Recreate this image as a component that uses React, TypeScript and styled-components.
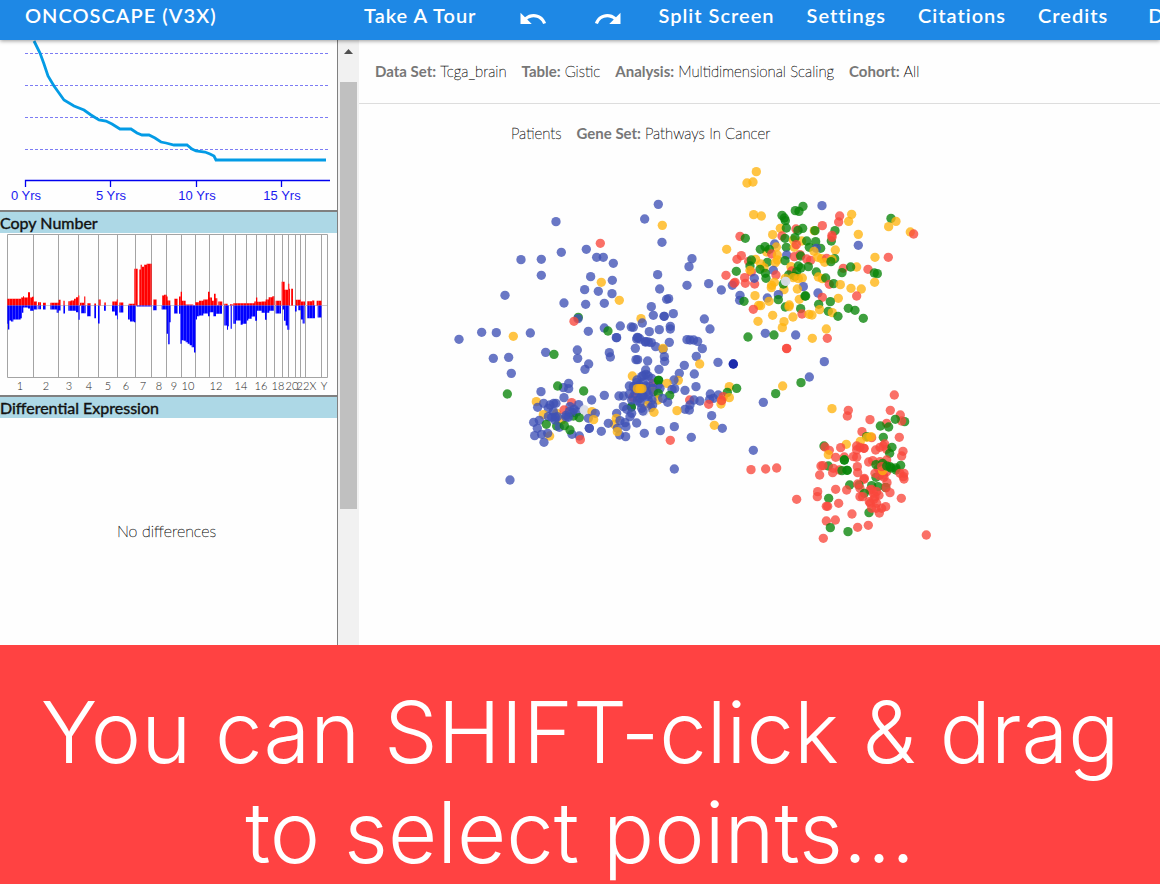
import React from "react";
import styled, { createGlobalStyle } from "styled-components";
import { MdRedo, MdUndo } from "react-icons/md";

const GlobalStyle = createGlobalStyle`
  *, *::before, *::after { box-sizing: border-box; }
  body {
    margin: 0;
    background: #fefefe;
    color: #000;
    font-family: Lato, "Open Sans", sans-serif;
    font-size: 15px;
    font-weight: 200;
  }
  button { font: inherit; color: inherit; border: 0; background: none; padding: 0; cursor: pointer; }
`;

const Page = styled.div`
  display: flex;
  flex-direction: column;
  min-height: 100vh;
  overflow: hidden;
`;

const Header = styled.header`
  position: relative;
  z-index: 1;
  display: flex;
  align-items: flex-start;
  height: 40px;
  padding-left: 25px;
  overflow: visible;
  background: #1e88e5;
  color: #fff;
  font-size: 20px;
  font-weight: 600;
  letter-spacing: 1px;
  line-height: 30px;
  box-shadow: 0 1px 4px rgba(0, 0, 0, 0.4);
`;

const Brand = styled.a`
  flex: 0 0 323px;
  color: inherit;
  text-decoration: none;
`;

const Nav = styled.nav`
  display: flex;
  flex: 1;
  min-width: 0;
  height: 40px;
  overflow: hidden;
`;

const NavLink = styled.a`
  flex: none;
  padding: 0 16px;
  color: inherit;
  text-decoration: none;
  white-space: nowrap;
`;

const IconButton = styled.button`
  display: flex;
  flex: 0 0 75px;
  justify-content: center;
  padding: 4px 0 0 5px;
  height: 40px;
`;

const Spacer = styled.span`
  flex: 0 0 8px;
`;

const Workspace = styled.div`
  display: flex;
  flex: 1;
`;

const Sidebar = styled.aside`
  display: flex;
  flex: 0 0 338px;
  flex-direction: column;
  border-right: 1px solid #808080;
`;

const PanelTitle = styled.h2`
  margin: 0;
  height: 23px;
  border-top: 2px solid #808080;
  background: #add8e6;
  color: #111;
  font-size: 16px;
  font-weight: 400;
  line-height: 22px;
  -webkit-text-stroke: 0.4px #111;
`;

const PanelChart = styled.svg`
  display: block;
  flex: none;
  width: 337px;
`;

const EmptyPanel = styled.div`
  display: flex;
  flex: 1;
  align-items: center;
  justify-content: center;
  padding: 0 4px 2px 0;
  font-size: 16px;
  -webkit-text-stroke: 0.3px #000;
`;

const ScrollTrack = styled.div`
  display: flex;
  flex: 0 0 21px;
  flex-direction: column;
  padding-left: 2px;
  background: #f1f1f1;
`;

const ScrollArrow = styled.svg`
  display: block;
  flex: none;
  width: 17px;
  height: 42px;
`;

const ScrollThumb = styled.div`
  width: 17px;
  height: 427px;
  background: #c0c0c0;
`;

const Main = styled.main`
  flex: 1;
  min-width: 0;
  overflow: hidden;
`;

const Facts = styled.dl<{ $inset?: boolean }>`
  display: flex;
  align-items: center;
  gap: 15px;
  margin: 0;
  height: ${(p) => (p.$inset ? 60 : 64)}px;
  padding-bottom: 2px;
  padding-left: ${(p) => (p.$inset ? 152 : 16)}px;
  border-bottom: ${(p) => (p.$inset ? 0 : 1)}px solid #ddd;
  white-space: nowrap;
`;

const Fact = styled.div`
  display: flex;
  gap: 4px;
`;

const FactName = styled.dt`
  color: #777;
  font-weight: 700;
`;

const FactValue = styled.dd`
  margin: 0;
  -webkit-text-stroke: 0.3px #000;
`;

const Plot = styled.svg`
  display: block;
  width: 801px;
  height: 400px;
`;

const Banner = styled.section`
  padding: 38px 20px 1px;
  background: #ff4242;
  color: #fff;
  font-family: Inter, sans-serif;
  font-size: 85px;
  font-weight: 300;
  line-height: 100px;
  text-align: center;
`;

const BannerText = styled.p`
  margin: 0;
`;

const SURVIVAL =
  "34,0 40,12 44,23 48,35 54,45 59,52 64,59 74,65 84,69 91,74 99,79 106,80 112,83 120,88 131,88 137,92 142,94 149,94 155,97 161,101 166,102 174,104 187,104 192,108 196,110 205,111 210,113 214,115 216,119 326,119";

const YEAR_TICKS: [number, string][] = [
  [26, "0 Yrs"],
  [111, "5 Yrs"],
  [197, "10 Yrs"],
  [282, "15 Yrs"],
];

function SurvivalChart() {
  return (
    <PanelChart viewBox="0 -1 337 170" height={170} role="img" aria-label="Survival">
      <g stroke="#7c7cf4" strokeDasharray="3 2">
        {[12.5, 44.5, 76.5, 108.5].map((y) => (
          <path key={y} d={`M25 ${y}H328`} />
        ))}
      </g>
      <polyline points={SURVIVAL} fill="none" stroke="#039be5" strokeWidth={2.8} />
      <path d="M330 139.5H25.5V146M110.5 139v7M196.5 139v7M281.5 139v7" fill="none" stroke="#0000f0" strokeWidth={1.3} />
      <g fill="#1a1af0" fontFamily="Liberation Sans, Arial, sans-serif" fontSize={13} fontWeight={400} textAnchor="middle">
        {YEAR_TICKS.map(([x, label]) => (
          <text key={x} x={x} y={159}>{label}</text>
        ))}
      </g>
    </PanelChart>
  );
}

/* Copy number runs as start-end:height, in thirds of a pixel. */
const GAINS =
  "22-63:20 63-69:24 69-72:28 72-84:24 84-90:40 90-96:24 96-102:26 102-111:12 114-123:10 129-138:8 151-176:8 176-182:17 190-194:14 205-212:13 212-222:15 222-228:20 228-234:25 234-238:30 240-252:8 252-256:27 262-272:7 283-288:6 296-302:18 313-318:9 337-350:12 350-354:18 358-370:9 386-405:5 403-413:110 418-422:108 422-426:122 426-432:116 432-440:122 440-455:125 460-470:18 486-492:30 492-500:32 500-503:27 503-511:15 523-533:20 537-542:27 542-546:41 546-557:14 557-580:3 585-597:10 597-610:14 610-624:18 624-629:41 629-636:24 636-642:14 642-647:35 647-652:22 655-667:12 673-683:5 690-698:4 700-763:7 763-768:12 768-772:24 772-785:11 785-797:12 797-806:18 806-817:25 817-823:28 827-843:14 845-854:71 854-864:47 864-868:65 868-870:50 873-879:50 887-903:17 903-915:12 922-936:13 936-943:15 950-965:14";
const LOSSES =
  "22-24:55 24-28:72 28-33:45 33-40:48 40-62:42 62-66:38 66-70:22 70-84:6 84-90:9 90-102:16 102-112:12 115-123:11 129-137:12 151-170:12 170-176:22 176-182:15 190-195:24 205-228:16 228-235:20 235-239:43 243-257:23 261-272:32 283-288:38 294-299:54 312-318:16 336-345:18 345-351:30 351-354:41 358-370:21 384-390:42 390-402:48 402-407:50 410-455:3 459-470:14 485-500:12 500-504:85 504-509:116 509-512:50 522-533:24 537-541:25 541-545:115 545-551:104 551-557:106 557-563:110 563-569:115 569-575:119 575-582:125 582-587:141 587-591:42 591-598:32 598-610:30 610-624:24 624-629:32 629-640:20 640-648:32 648-666:25 673-681:60 681-684:73 684-687:62 692-696:70 700-708:55 708-722:45 722-728:58 728-740:55 740-745:45 745-755:40 755-765:33 765-771:46 771-785:16 785-795:22 795-800:43 800-808:22 808-822:16 827-843:24 847-852:12 852-857:46 857-862:60 862-868:73 885-890:18 895-903:14 903-908:42 908-914:54 922-945:38 953-965:36";

const CHROMOSOME_EDGES = [33, 58, 78, 98, 117, 135, 151, 166, 181, 195, 209, 223, 235, 246, 256, 266, 274, 282, 288, 295, 300, 305, 321];

const CHROMOSOMES: [number, string][] = [
  [20, "1"], [46, "2"], [69, "3"], [89, "4"], [108, "5"], [126, "6"], [143, "7"], [159, "8"], [174, "9"], [188, "10"],
  [216, "12"], [241, "14"], [261, "16"], [278, "18"], [292, "20"], [303, "22"], [313, "X"], [324, "Y"],
];

function runPath(runs: string, direction: number) {
  return runs
    .split(" ")
    .map((run) => {
      const [start, end, height] = run.split(/[-:]/).map(Number);
      return `M${start} 0H${end}V${height * direction}H${start}Z`;
    })
    .join("");
}

function CopyNumberChart() {
  return (
    <PanelChart viewBox="0 -1 337 162" height={162} role="img" aria-label="Copy number by chromosome">
      <defs>
        <pattern id="stripes" width={9} height={9} patternUnits="userSpaceOnUse">
          <rect width={2} height={9} fill="#fff" opacity={0.3} />
        </pattern>
      </defs>
      <g fill="none" stroke="#a4a4a4">
        <path d="M7.5 .5H327.5V143.5H7.5Z" />
        <path d={CHROMOSOME_EDGES.map((x) => `M${x}.5 0V143`).join("")} />
        <path d="M8 71.5H327" stroke="#ccc" />
      </g>
      <g transform="translate(0 71.5) scale(.3333)">
        <path d={runPath(GAINS, -1)} fill="#f00" />
        <path d={runPath(LOSSES, 1)} fill="#00f" />
        <path d={runPath(GAINS, -1)} fill="url(#stripes)" />
        <path d={runPath(LOSSES, 1)} fill="url(#stripes)" />
      </g>
      <g fill="#222" fontSize={11} fontWeight={300} textAnchor="middle">
        {CHROMOSOMES.map(([x, label]) => (
          <text key={label} x={x} y={156}>{label}</text>
        ))}
      </g>
    </PanelChart>
  );
}

const DOT_COLORS: Record<string, string> = {
  b: "#3f51b5",
  r: "#f9483c",
  g: "#088408",
  y: "#ffb30f",
  n: "#1020a8",
  w: "#d8dce8",
};

/* Dots are listed by colour letter and position, in thirds of a pixel from the cluster's origin. */
const CLUSTERS = [
  {
    x: 81,
    y: -4,
    dots: "b655,133 b614,177 b348,185 y667,196 b666,247 r481,250 b439,268 b364,277 b470,292 b490,292 b243,299 b304,298 b520,310 b304,346 b452,350 b517,361 y484,367 b653,344 b434,389 b475,394 b516,401 b659,387 b195,406 y538,421 b686,416 b680,418 b372,429 b437,433 b493,430 b634,440 g415,472 b414,476 r402,484 y603,476 b640,466 b673,469 b672,469 b700,461 b607,489 b541,498 b574,501 b580,502 b493,504 g504,513 b445,514 b628,515 b658,509 b691,499 b691,507 b125,517 b169,518 y220,529 b271,519 b529,533 b594,533 b57,538 b617,545",
  },
  {
    x: 301,
    y: -4,
    dots: "y289,35 y261,69 y279,66 b486,137 g429,139 g406,152 g417,154 g366,166 g373,174 g376,182 y281,164 y304,168 r539,168 y575,163 r536,186 y566,184 r487,197 g693,175 y708,184 y686,200 y751,216 r761,222 y361,205 g379,204 g428,205 r408,207 g414,211 y463,212 g465,212 g525,212 y338,224 y595,223 r240,229 g256,235 r366,228 g375,235 g514,243 r516,226 r516,232 b595,256 y200,268 b344,252 y425,243 y400,240 g405,233 g440,243 g467,245 y349,261 g379,262 y403,262 r409,254 y320,276 g315,260 g301,268 g328,268 r335,282 g448,262 g482,265 b469,265 y526,270 y462,274 r244,287 r231,298 y352,285 b380,285 y352,300 g375,302 r403,290 r420,284 g422,288 r440,297 r452,301 y473,292 y485,296 r500,295 g524,296 y516,298 y494,307 g513,305 y645,292 r685,292 r266,304 y287,298 g274,300 g322,307 y346,308 g270,318 y302,312 y312,323 b340,331 y393,320 g415,318 g423,324 g445,320 g300,328 g229,334 r274,336 y270,331 r198,346 g316,340 r395,333 g410,335 g469,336 r550,325 g546,338 y590,321 g572,321 r624,328 g643,339 g652,341 r348,345 g318,355 g386,345 g405,349 r254,353 y400,353 y415,356 y427,354 y475,351 y487,356 g497,354 r225,367 b217,376 r222,370 r256,370 r284,372 b283,355 y343,367 y335,376 y334,383 y376,355 y372,389 g370,372 b430,380 y412,387 w377,364 w377,364 r508,373 g521,371 y541,374 y573,385 y604,387 y644,367 r590,408 b240,406 b239,421 g252,424 y285,407 b322,414 b355,404 y327,424 g355,419 y418,418 g435,408 g437,408 b474,399 r487,412 y535,415 g511,425 g476,433 y296,436 y302,437 r280,448 g376,441 y388,435 y387,440 g422,446 y479,449 g505,454 y517,458 g534,469 g565,445 g585,451 g610,475 r426,462 y447,463 y456,465 y338,466 y399,471 y372,485 y367,503 y294,484 y499,507 b133,477 b150,507 b96,296 b87,320 b81,376 b146,371 b184,390 b316,520 g342,525 g264,531 b407,525 y457,535 r502,535 r380,566",
  },
  {
    x: 81,
    y: 156,
    dots: "b160,115 b206,112 b317,97 g342,103 b412,90 b413,115 b446,132 b435,148 b214,160 g202,222 b303,215 b386,190 b370,203 b386,206 g353,198 g431,213 b455,240 b372,233 y289,245 b293,262 b311,250 b341,250 b348,250 b325,265 y310,284 r395,248 b390,260 b416,254 y350,280 y365,300 b340,275 r372,270 b398,278 g400,288 b410,276 b378,286 b346,292 b385,292 b378,292 b325,290 b281,307 b298,301 g319,313 b292,325 b284,347 b305,343 y329,348 b323,340 b312,367 g350,318 b358,322 g373,317 b396,343 g390,330 b418,348 r421,359 g418,293 w433,270 w433,270 y456,275 b445,295 b466,280 y461,299 b448,325 b448,325 b345,300 b352,290 b330,255 b335,292 b402,268 b388,275 b210,480",
  },
  {
    x: 221,
    y: 156,
    dots: "b110,53 b73,226 b64,334 b88,98 b91,111 b170,57 b180,57 b172,52 b196,66 b214,68 b205,66 b227,80 b268,67 b166,85 b321,59 b341,60 b330,60 b353,64 b367,86 b349,109 b249,88 y249,85 b253,110 b254,124 b168,119 b173,119 b203,123 b313,136 y359,132 b414,127 n460,132 n460,132 b343,162 b237,148 b298,160 b197,150 b198,163 b190,166 b205,168 y157,168 b185,170 y295,181 b282,180 r220,190 b171,180 b170,188 b215,175 b235,195 g236,181 g236,181 b190,188 b148,198 b178,195 b198,198 y261,190 b348,200 b315,211 b284,206 b276,208 b210,200 b218,205 y220,215 b240,205 b160,200 b185,205 b170,212 b200,215 b117,228 r158,232 b130,228 b148,222 b180,235 b190,228 b172,242 b205,240 b220,215 g235,220 g269,226 b263,247 y234,240 b216,240 b205,225 b248,235 b360,243 r329,240 b342,240 b391,222 b389,238 b400,235 b415,225 y448,200 g442,217 g470,205 y425,240 r430,230 y448,233 y423,252 r425,242 r386,253 b330,255 b328,270 b315,268 y291,272 b395,287 y403,316 b427,325 y202,257 b212,263 b218,255 y222,277 w192,275 b189,273 b185,265 b130,260 b154,261 g154,261 b150,290 b140,268 b155,280 b110,280 y109,295 y103,313 b85,310 b120,302 b170,309 b138,320 b135,308 b119,345 b112,325 y112,335 b137,350 b193,340 b241,332 b334,352 b283,320 r271,361 b283,447 b155,240 b165,220 b185,225 b180,248 y172,206 y186,206 y180,206",
  },
  {
    x: 381,
    y: 176,
    dots: "r140,25 b253,65 b208,111 g183,128 y128,138 g107,161 b70,187 y276,206 r463,165 r451,211 r325,211 r322,228 r390,239 r440,250 r481,225 g494,245 r485,243 g466,238 g421,258 g446,261 r366,275 r478,292 g430,292 r395,293 g380,290 y393,290 y381,292 y361,304 y319,313 g252,318 r255,321 r268,331 y265,344 r302,323 r350,318 r360,322 r372,325 r372,325 r350,330 r287,352 r313,351 g313,360 g313,360 r407,330 r420,322 r434,312 r440,328 r430,318 g456,322 g449,340 r489,334 r485,348 r350,352 r340,350 r386,366 r398,362 g265,378 r243,378 r249,377 r239,405 r280,385 r278,398 r298,390 g306,392 g321,391 g322,391 r352,380 r353,398 r373,415 r372,418 r420,365 r440,360 g408,412 r415,385 g408,374 g428,370 r405,400 r418,407 r430,405 r440,395 r432,412 y428,392 r425,380 g440,378 g453,384 g468,390 g482,376 g450,380 g468,384 r480,400 r492,400 r492,417 r490,410 b40,331 r441,428 g395,437 g414,440 g437,443 r438,443 r395,448 g329,435 g357,435 r353,432 r360,445 r320,450 r287,448 r233,455 r232,470 g266,475 r259,499 r263,499 r296,490 r170,478 r33,389 r77,387 r110,384 r390,450 r400,460 r410,455 r417,466 r405,470 r450,458 r484,475 g373,460 r360,470 r368,470 r388,485 r391,490 r410,490 r402,478 r437,500 r425,505 r418,519 g387,518 r395,505 r408,505 r336,522 r259,543 r286,540 g271,563 r353,562 r385,556 g324,575 r250,595 r559,585",
  },
];

function ScatterPlot() {
  return (
    <Plot viewBox="0 0 801 400" role="img" aria-label="Patients, multidimensional scaling">
      {CLUSTERS.map((cluster, i) => (
        <g key={i} transform={`translate(${cluster.x} ${cluster.y}) scale(.3333)`}>
          {cluster.dots.split(" ").map((dot, j) => {
            const [cx, cy] = dot.slice(1).split(",");
            return <circle key={j} cx={cx} cy={cy} r={14} fill={DOT_COLORS[dot[0]]} opacity={0.78} />;
          })}
        </g>
      ))}
    </Plot>
  );
}

const DATA_FACTS = [
  ["Data Set:", "Tcga_brain"],
  ["Table:", "Gistic"],
  ["Analysis:", "Multidimensional Scaling"],
  ["Cohort:", "All"],
];

export default function App() {
  return (
    <>
      <GlobalStyle />
      <Page>
        <Header>
          <Brand href="#">ONCOSCAPE (V3X)</Brand>
          <Nav>
            <NavLink href="#tour">Take A Tour</NavLink>
            <IconButton aria-label="Undo"><MdUndo size={30} /></IconButton>
            <IconButton aria-label="Redo"><MdRedo size={30} /></IconButton>
            <NavLink href="#split">Split Screen</NavLink>
            <NavLink href="#settings">Settings</NavLink>
            <NavLink href="#citations">Citations</NavLink>
            <NavLink href="#credits">Credits</NavLink>
            <Spacer />
            <NavLink href="#d">D</NavLink>
          </Nav>
        </Header>
        <Workspace>
          <Sidebar>
            <SurvivalChart />
            <PanelTitle>Copy Number</PanelTitle>
            <CopyNumberChart />
            <PanelTitle>Differential Expression</PanelTitle>
            <EmptyPanel>No differences</EmptyPanel>
          </Sidebar>
          <ScrollTrack>
            <ScrollArrow viewBox="0 0 17 42" aria-hidden="true">
              <path d="M4 14L8.5 9L13 14Z" fill="#505050" />
            </ScrollArrow>
            <ScrollThumb />
          </ScrollTrack>
          <Main>
            <Facts>
              {DATA_FACTS.map(([name, value]) => (
                <Fact key={name}>
                  <FactName>{name}</FactName>
                  <FactValue>{value}</FactValue>
                </Fact>
              ))}
            </Facts>
            <Facts $inset>
              <Fact>
                <FactValue>Patients</FactValue>
              </Fact>
              <Fact>
                <FactName>Gene Set:</FactName>
                <FactValue>Pathways In Cancer</FactValue>
              </Fact>
            </Facts>
            <ScatterPlot />
          </Main>
        </Workspace>
        <Banner>
          <BannerText>
            You can SHIFT-click &amp; drag
            <br />
            to select points...
          </BannerText>
        </Banner>
      </Page>
    </>
  );
}
